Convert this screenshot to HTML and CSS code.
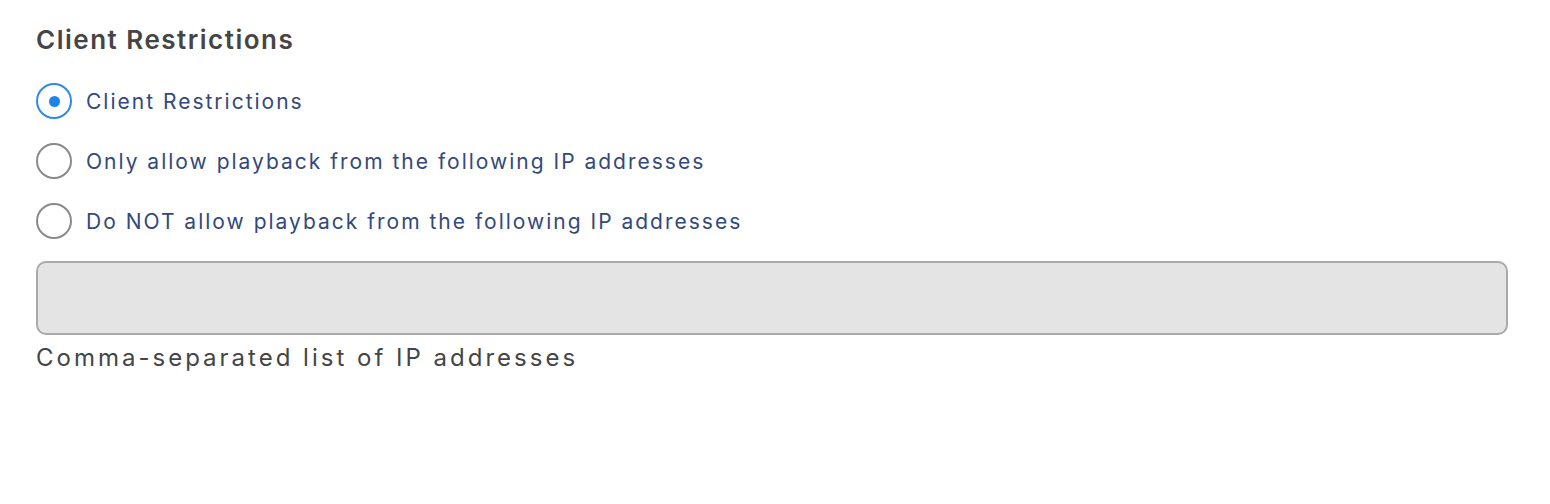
FILE: index.html
```html
<!DOCTYPE html>
<html>
<head>
<meta charset="utf-8">
<link rel="stylesheet" href="styles.css">
</head>
<body>
<section class="panel">
  <h2 class="title">Client Restrictions</h2>
  <div class="options">
    <label class="option">
      <input type="radio" name="restrict" class="radio" checked>
      <span class="label">Client Restrictions</span>
    </label>
    <label class="option">
      <input type="radio" name="restrict" class="radio">
      <span class="label">Only allow playback from the following IP addresses</span>
    </label>
    <label class="option">
      <input type="radio" name="restrict" class="radio">
      <span class="label">Do NOT allow playback from the following IP addresses</span>
    </label>
  </div>
  <input type="text" class="ip-input" disabled>
  <p class="hint">Comma-separated list of IP addresses</p>
</section>
</body>
</html>
```

FILE: styles.css
```css
html, body {
  margin: 0;
  padding: 0;
  background: #ffffff;
}

body {
  font-family: Inter, "Open Sans", sans-serif;
}

.panel {
  padding: 22px 42px 0 36px;
}

.title {
  margin: 0;
  font-size: 26px;
  font-weight: 600;
  color: #454545;
  line-height: 36px;
  letter-spacing: 1.5px;
}

.options {
  display: flex;
  flex-direction: column;
  gap: 24px;
  margin-top: 25px;
}

.option {
  display: flex;
  align-items: center;
  gap: 14px;
  height: 36px;
  cursor: pointer;
}

.radio {
  appearance: none;
  -webkit-appearance: none;
  margin: 0;
  width: 36px;
  height: 36px;
  border: 2px solid #8a8a8a;
  border-radius: 50%;
  box-sizing: border-box;
  display: grid;
  place-items: center;
  background: #fff;
  flex: none;
}

.radio:checked {
  border-color: #2e8ae6;
}

.radio:checked::after {
  content: "";
  width: 11px;
  height: 11px;
  border-radius: 50%;
  background: #1f84ea;
}

.label {
  font-size: 21px;
  color: #33497a;
  letter-spacing: 2px;
}

.ip-input {
  display: block;
  margin-top: 22px;
  width: 100%;
  height: 74px;
  box-sizing: border-box;
  border: 2px solid #a9a9ae;
  border-radius: 10px;
  background: #e4e4e4;
}

.hint {
  margin: 6px 0 0;
  font-size: 24px;
  color: #454545;
  line-height: 34px;
  letter-spacing: 3px;
}
```
